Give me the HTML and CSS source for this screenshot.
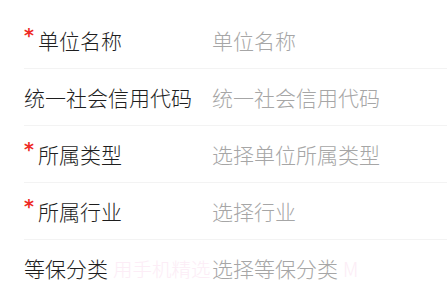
FILE: index.html
```html
<!DOCTYPE html>
<html>
<head>
  <title>单位信息</title>
  <link rel="stylesheet" href="styles.css">
</head>
<body>
  <div class="form">
    <div class="row">
      <div class="label"><span class="star">*</span>单位名称</div>
      <div class="value">单位名称</div>
    </div>
    <div class="row">
      <div class="label">统一社会信用代码</div>
      <div class="value">统一社会信用代码</div>
    </div>
    <div class="row">
      <div class="label"><span class="star">*</span>所属类型</div>
      <div class="value">选择单位所属类型</div>
    </div>
    <div class="row">
      <div class="label"><span class="star">*</span>所属行业</div>
      <div class="value">选择行业</div>
    </div>
    <div class="row last">
      <div class="label">等保分类</div>
      <div class="value">选择等保分类</div>
      <div class="watermark wm-left">用手机精选</div>
      <div class="watermark wm-right">M</div>
    </div>
  </div>
</body>
</html>
```

FILE: styles.css
```css
body {
  margin: 0;
  padding: 0;
  background: #fff;
  font-family: "Noto Sans CJK SC", sans-serif;
  overflow: hidden;
}

.form {
  padding-top: 12px;
  margin-left: 24px;
}

.row {
  position: relative;
  display: flex;
  align-items: center;
  height: 56px;
  border-bottom: 1px solid #f3f3f3;
  font-size: 21px;
  font-weight: 300;
}

.row.last {
  border-bottom: none;
}

.label {
  width: 188px;
  flex-shrink: 0;
  color: #1e1e1e;
  white-space: nowrap;
}

.star {
  display: inline-block;
  width: 14px;
  color: #ee2a24;
  font-family: "DejaVu Sans", sans-serif;
  font-size: 19px;
  font-weight: bold;
  line-height: 1;
  vertical-align: 7px;
}

.value {
  position: relative;
  z-index: 1;
  color: #a6a6a6;
  white-space: nowrap;
}

.watermark {
  position: absolute;
  top: 50%;
  transform: translateY(-50%);
  font-size: 19.5px;
  color: #fcedf6;
  white-space: nowrap;
}

.wm-left {
  left: 89px;
}

.wm-right {
  left: 319px;
}
```
